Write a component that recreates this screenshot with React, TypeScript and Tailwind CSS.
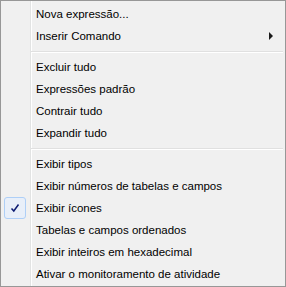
import React from "react";

type Item = { label: string; checked?: boolean; sub?: boolean } | "sep";

const items: Item[] = [
  { label: "Nova expressão..." },
  { label: "Inserir Comando", sub: true },
  "sep",
  { label: "Excluir tudo" },
  { label: "Expressões padrão" },
  { label: "Contrair tudo" },
  { label: "Expandir tudo" },
  "sep",
  { label: "Exibir tipos" },
  { label: "Exibir números de tabelas e campos" },
  { label: "Exibir ícones", checked: true },
  { label: "Tabelas e campos ordenados" },
  { label: "Exibir inteiros em hexadecimal" },
  { label: "Ativar o monitoramento de atividade" },
];

export default function App() {
  return (
    <div className="w-[286px] h-[287px] border border-[#979797] bg-[#f0f0f0] relative overflow-hidden" style={{ fontFamily: '"Liberation Sans", Arial, sans-serif' }}>
      <div className="absolute left-[29px] top-0 bottom-0 w-px bg-[#e2e3e3]" />
      <div className="absolute left-[30px] top-0 bottom-0 w-px bg-white" />
      <div className="relative flex flex-col pt-[2px] px-[2px]">
        {items.map((it, i) =>
          it === "sep" ? (
            <div key={i} className="h-[9px] flex flex-col justify-center pl-[28px]">
              <div className="h-px bg-[#e0e0e0]" />
              <div className="h-px bg-white" />
            </div>
          ) : (
            <div key={i} className="h-[22px] flex items-center relative">
              {it.checked && (
                <div className="absolute left-[1px] top-0 w-[22px] h-[22px] rounded-[3px] border border-[#aecff7] bg-[#e8eff9] flex items-center justify-center">
                  <svg width="10" height="10" viewBox="0 0 10 10">
                    <path d="M1.5 5.5 L3.8 8 L8.5 1.5" fill="none" stroke="#0c1b72" strokeWidth="1.5" />
                  </svg>
                </div>
              )}
              <span className="pl-[33px] pt-[2px] text-[11.5px] text-black leading-none whitespace-nowrap">{it.label}</span>
              {it.sub && (
                <svg className="absolute right-[10px] top-[7px]" width="4" height="8" viewBox="0 0 4 8">
                  <path d="M0 0 L4 4 L0 8 Z" fill="#1a1a1a" />
                </svg>
              )}
            </div>
          )
        )}
      </div>
    </div>
  );
}
